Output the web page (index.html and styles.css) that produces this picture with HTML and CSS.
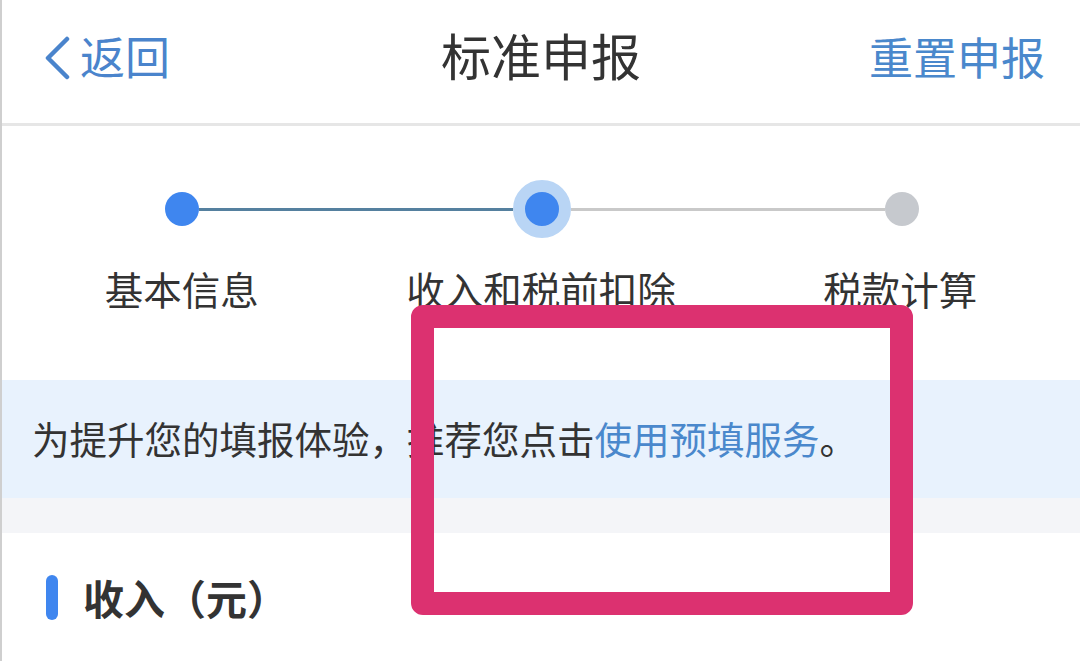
FILE: index.html
```html
<!DOCTYPE html>
<html lang="zh-CN">
<head>
    <meta charset="UTF-8">
    <meta name="viewport" content="width=device-width, initial-scale=1.0">
    <title>标准申报</title>
    <link rel="stylesheet" href="styles.css">
</head>
<body>
    <div class="page">
        <div class="header">
            <a class="back" href="#">
                <svg class="chevron" width="28" height="44" viewBox="0 0 28 44">
                    <path d="M24 3 L5 22 L24 41" fill="none" stroke="#4a84cc" stroke-width="4.5" stroke-linecap="round" stroke-linejoin="round"/>
                </svg>
                <span>返回</span>
            </a>
            <div class="title">标准申报</div>
            <a class="reset" href="#">重置申报</a>
        </div>

        <!-- steps -->
        <div class="steps">
            <div class="track">
                <div class="dot done"></div>
                <div class="line done"></div>
                <div class="dot current"></div>
                <div class="line"></div>
                <div class="dot"></div>
            </div>
            <div class="labels">
                <div>基本信息</div>
                <div>收入和税前扣除</div>
                <div>税款计算</div>
            </div>
        </div>

        <div class="notice">
            为提升您的填报体验，推荐您点击<a href="#">使用预填服务</a>。
        </div>
        <div class="gap"></div>

        <div class="section">
            <div class="section-title">
                <span class="bar"></span>
                <h2>收入（元）</h2>
            </div>
        </div>

        <!-- highlight box -->
        <div class="mark"></div>
    </div>
</body>
</html>
```

FILE: styles.css
```css
body {
    margin: 0;
    padding: 0;
    font-family: "Noto Sans CJK SC", "Noto Sans", sans-serif;
    color: #333;
    background-color: #fff;
}

.page {
    position: relative;
    width: 1080px;
    height: 661px;
    overflow: hidden;
    box-sizing: border-box;
    border-left: 2px solid #cfcfcf;
}

.header {
    display: grid;
    grid-template-columns: 1fr auto 1fr;
    align-items: center;
    height: 111px;
    padding-bottom: 12px;
    border-bottom: 3px solid #e6e6e6;
}

.back {
    display: flex;
    align-items: center;
    padding-left: 41px;
    color: #4a84cc;
    font-size: 45px;
    text-decoration: none;
}

.chevron {
    margin-right: 9px;
    margin-top: 4px;
}

.title {
    font-size: 50px;
    color: #333;
    margin-top: -4px;
}

.reset {
    justify-self: end;
    padding-right: 35px;
    color: #4a88cc;
    font-size: 44px;
    text-decoration: none;
}

.steps {
    padding: 54px 0 69px;
}

.track {
    display: flex;
    align-items: center;
    padding: 0 161px 0 163px;
}

.dot {
    width: 34px;
    height: 34px;
    border-radius: 50%;
    background-color: #c6c9ce;
    flex-shrink: 0;
}

.dot.done {
    background-color: #3f86ef;
}

.dot.current {
    width: 58px;
    height: 58px;
    box-sizing: border-box;
    border: 12px solid #b9d5f5;
    background-color: #3f86ef;
}

.line {
    flex: 1;
    height: 3px;
    background-color: #c9c9c9;
}

.line.done {
    background-color: #55809f;
}

.labels {
    display: grid;
    grid-template-columns: repeat(3, 1fr);
    margin-top: 27px;
    text-align: center;
    font-size: 38.5px;
    line-height: 46px;
    color: #333;
}

.notice {
    height: 118px;
    display: flex;
    align-items: center;
    padding-left: 30px;
    padding-bottom: 4px;
    box-sizing: border-box;
    background-color: #e8f2fd;
    font-size: 37.5px;
    color: #333;
}

.notice a {
    color: #4a88cc;
    text-decoration: none;
}

.gap {
    height: 35px;
    background-color: #f4f5f8;
}

.section {
    padding: 40px 0 0 44px;
}

.section-title {
    display: flex;
    align-items: center;
}

.bar {
    width: 12px;
    height: 45px;
    border-radius: 6px;
    background-color: #3f86ef;
    margin-right: 25px;
}

.section-title h2 {
    margin: 0;
    font-size: 41px;
    line-height: 48px;
    font-weight: bold;
    color: #333;
}

/* pink annotation frame */
.mark {
    position: absolute;
    left: 409px;
    top: 305px;
    width: 502px;
    height: 310px;
    box-sizing: border-box;
    border: 23px solid #dc3170;
    border-radius: 12px;
}
```
